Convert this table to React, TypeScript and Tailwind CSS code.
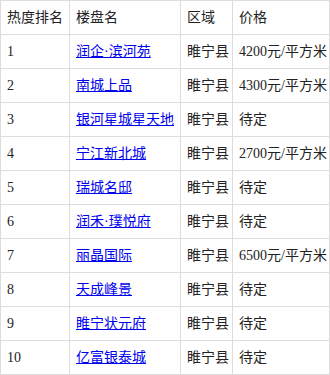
const rows: [string, string, string, string][] = [
  ["1", "润企·滨河苑", "睢宁县", "4200元/平方米"],
  ["2", "南城上品", "睢宁县", "4300元/平方米"],
  ["3", "银河星城星天地", "睢宁县", "待定"],
  ["4", "宁江新北城", "睢宁县", "2700元/平方米"],
  ["5", "瑞城名邸", "睢宁县", "待定"],
  ["6", "润禾·璞悦府", "睢宁县", "待定"],
  ["7", "丽晶国际", "睢宁县", "6500元/平方米"],
  ["8", "天成峰景", "睢宁县", "待定"],
  ["9", "睢宁状元府", "睢宁县", "待定"],
  ["10", "亿富银泰城", "睢宁县", "待定"],
];

const cell = "border border-[#dddddd] h-[34px] px-[6px] py-0 text-left align-middle whitespace-nowrap";

export default function App() {
  return (
    <div className="bg-white text-[#222222] text-[14px] font-['Liberation_Serif','Noto_Sans_CJK_SC',serif]">
      <table className="border-collapse w-[330px] table-fixed">
        <colgroup>
          <col className="w-[69px]" />
          <col className="w-[111px]" />
          <col className="w-[52px]" />
          <col />
        </colgroup>
        <thead>
          <tr>
            <th className={cell + " font-normal"}>热度排名</th>
            <th className={cell + " font-normal"}>楼盘名</th>
            <th className={cell + " font-normal"}>区域</th>
            <th className={cell + " font-normal"}>价格</th>
          </tr>
        </thead>
        <tbody>
          {rows.map((r) => (
            <tr key={r[0]}>
              <td className={cell}>{r[0]}</td>
              <td className={cell}>
                <a href="#" className="text-[#0000ee] underline">
                  {r[1]}
                </a>
              </td>
              <td className={cell}>{r[2]}</td>
              <td className={cell}>{r[3]}</td>
            </tr>
          ))}
        </tbody>
      </table>
    </div>
  );
}
